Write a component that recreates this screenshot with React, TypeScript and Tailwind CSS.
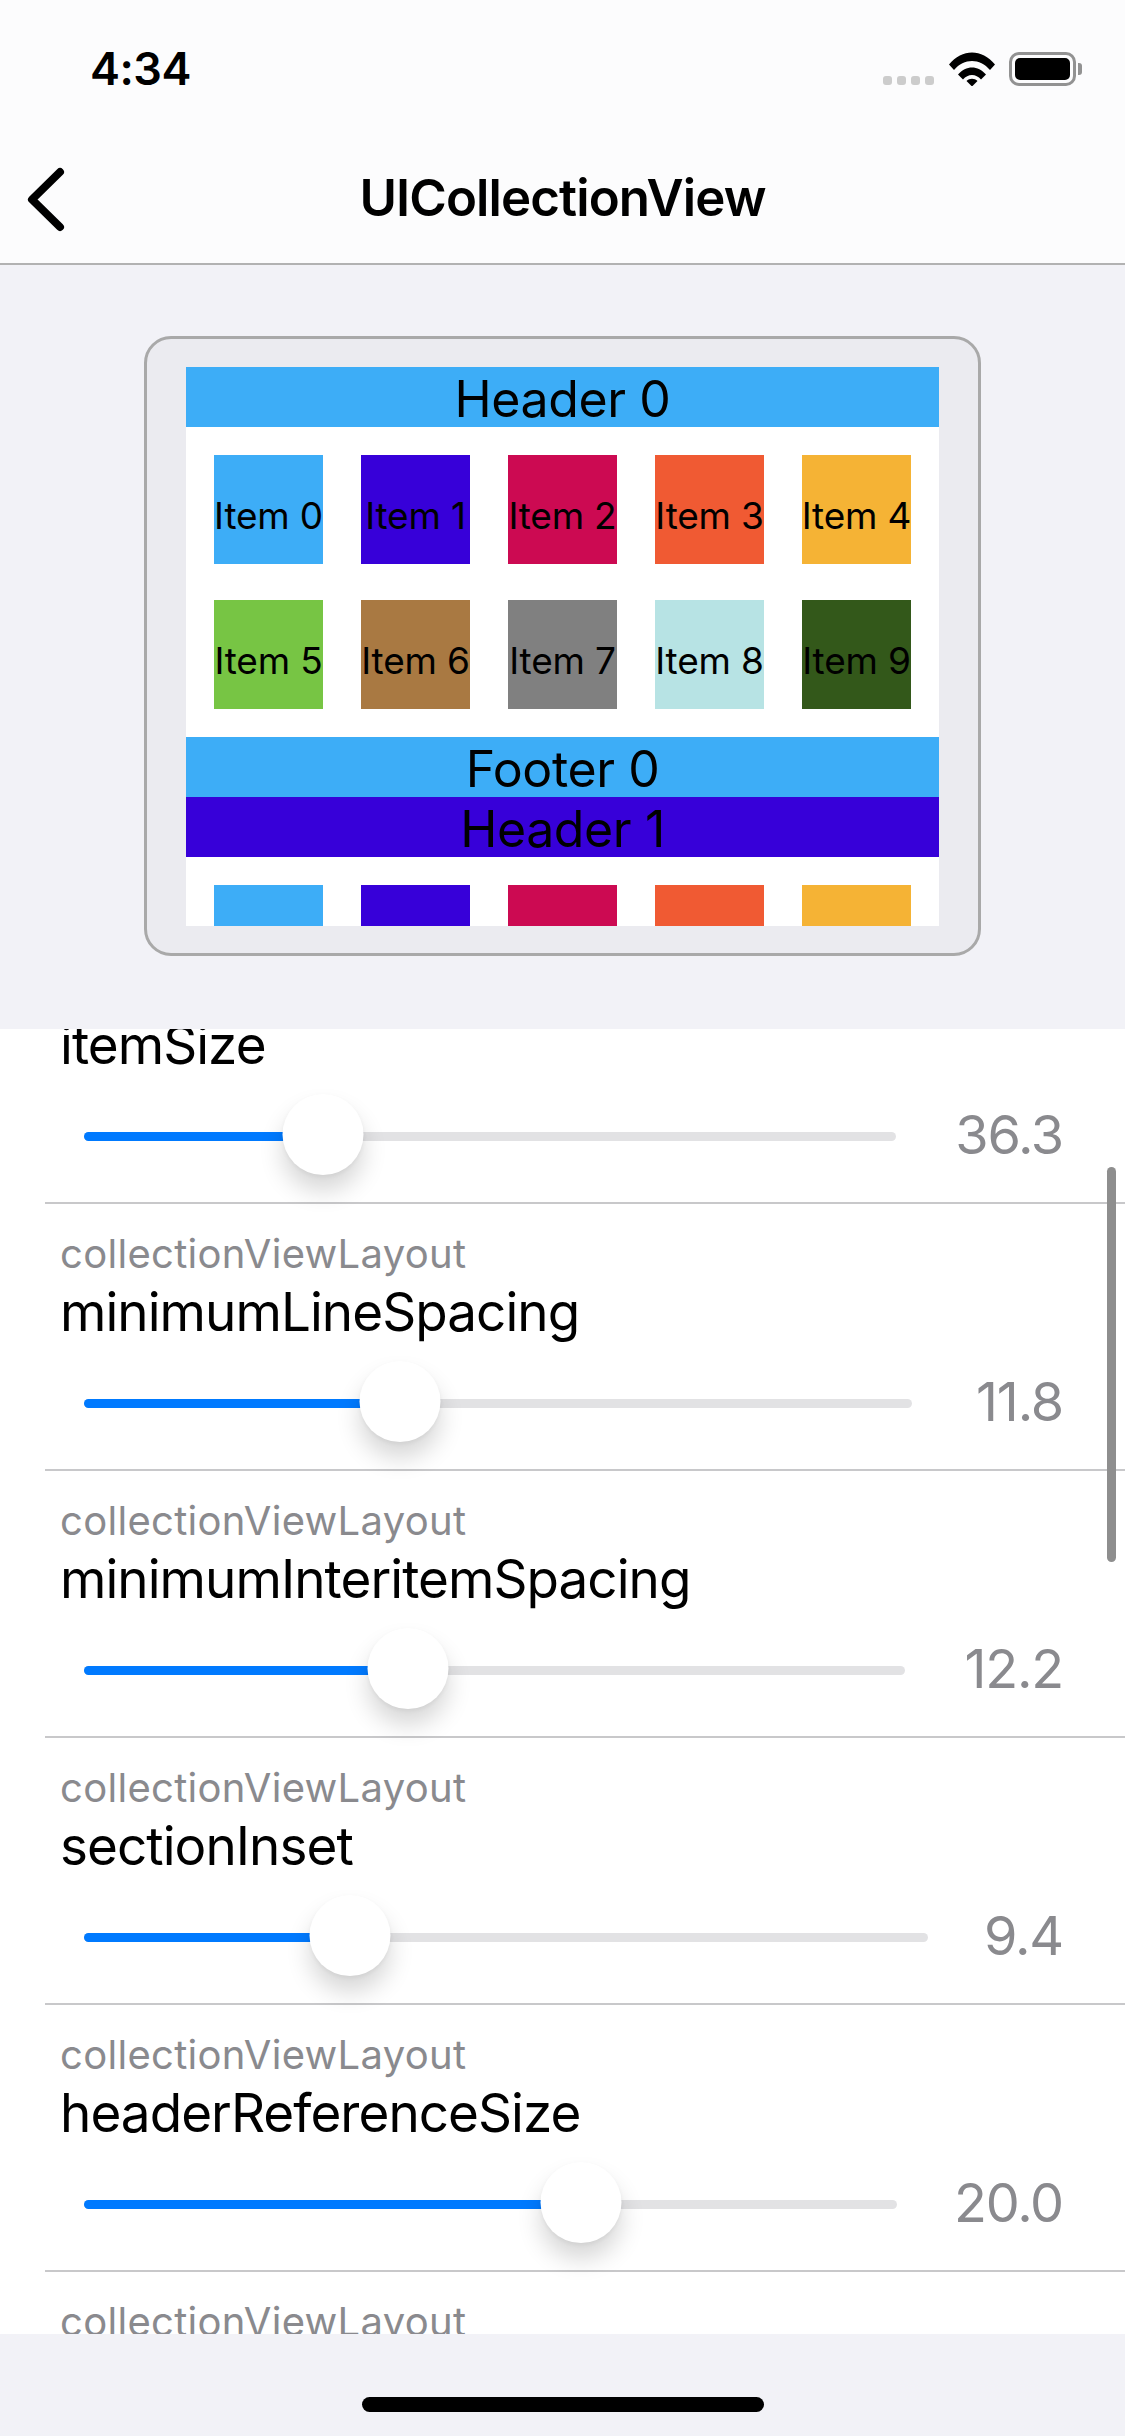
const palette = [
  "bg-[#3dadf7]",
  "bg-[#3700d9]",
  "bg-[#cc0a52]",
  "bg-[#f05a33]",
  "bg-[#f5b335]",
  "bg-[#77c544]",
  "bg-[#a97942]",
  "bg-[#808080]",
  "bg-[#b7e3e4]",
  "bg-[#33581a]",
];

const rows = [
  { label: "collectionViewLayout", name: "itemSize", value: "36.3", percent: 29.4, gap: "gap-[59px]" },
  { label: "collectionViewLayout", name: "minimumLineSpacing", value: "11.8", percent: 38.2, gap: "gap-[64px]" },
  { label: "collectionViewLayout", name: "minimumInteritemSpacing", value: "12.2", percent: 39.4, gap: "gap-[59px]" },
  { label: "collectionViewLayout", name: "sectionInset", value: "9.4", percent: 31.5, gap: "gap-[56px]" },
  { label: "collectionViewLayout", name: "headerReferenceSize", value: "20.0", percent: 61.1, gap: "gap-[57px]" },
  { label: "collectionViewLayout", name: "footerReferenceSize", value: "20.0", percent: 61.1, gap: "gap-[57px]" },
];

function StatusBar() {
  return (
    <div className="flex h-[132px] items-start justify-between pl-[90px] pr-[43px] pt-[43px]">
      <span className="text-[45px] font-semibold leading-[52px] tracking-[-0.5px] text-black">4:34</span>
      <div className="flex items-end pt-[9px]">
        {/* signal */}
        <div className="mb-[1px] flex gap-[5px]">
          {[0, 1, 2, 3].map((i) => (
            <div key={i} className="h-[9px] w-[9px] rounded-[3px] bg-[#cccccc]" />
          ))}
        </div>
        <svg className="ml-[15px]" width="46" height="34" viewBox="0 0 46 34">
          <path d="M0 12.5C13 -3.5 33 -3.5 46 12.5L41 18C31 6 15 6 5 18Z" fill="black" />
          <path d="M9 22.5C17 13 29 13 37 22.5L32 27.5C27 21.5 19 21.5 14 27.5Z" fill="black" />
          <path d="M17.5 29C20.5 26 25.5 26 28.5 29L23 34.5Z" fill="black" />
        </svg>
        <div className="ml-[14px] flex items-center">
          <div className="box-border h-[34px] w-[67px] rounded-[10px] border-[3px] border-[#929292] p-[3px]">
            <div className="h-full w-full rounded-[5px] bg-black" />
          </div>
          <div className="ml-[2px] h-[12px] w-[4px] rounded-r-[3px] bg-[#929292]" />
        </div>
      </div>
    </div>
  );
}

function NavBar() {
  return (
    <div className="relative flex h-[133px] items-start justify-center border-b-[2px] border-[#b2b2b2]">
      <svg className="absolute left-[24px] top-[34px]" width="42" height="66" viewBox="0 0 42 66">
        <path d="M36 6L8 33.5L36 61" fill="none" stroke="black" strokeWidth="8" strokeLinecap="round" strokeLinejoin="round" />
      </svg>
      <span className="mt-[36px] text-[51px] font-semibold leading-[60px] tracking-[-0.9px] text-black">UICollectionView</span>
    </div>
  );
}

function SupplementaryBar({ text, color }: { text: string; color: string }) {
  return (
    <div className={`flex h-[60px] items-center justify-center pt-[3px] text-[50px] leading-none tracking-[-0.4px] text-black ${color}`}>
      {text}
    </div>
  );
}

function ItemGrid({ showText }: { showText: boolean }) {
  return (
    <div className="grid grid-cols-5 gap-x-[38px] gap-y-[36px] px-[28px] pt-[28px] pb-[28px]">
      {palette.slice(0, showText ? 10 : 5).map((color, i) => (
        <div
          key={i}
          className={`flex h-[109px] w-[109px] items-center justify-center whitespace-nowrap pt-[11px] text-[37px] leading-none tracking-[-0.2px] text-black ${color}`}
        >
          {showText ? `Item ${i}` : ""}
        </div>
      ))}
    </div>
  );
}

function Preview() {
  return (
    <div className="flex h-[764px] justify-center bg-[#f2f2f7] pt-[71px]">
      <div className="box-border h-[620px] w-[837px] rounded-[27px] border-[3px] border-[#a9a9a9] bg-[#ebebf0] pl-[39px] pt-[28px]">
        <div className="h-[559px] w-[753px] overflow-hidden bg-white">
          <SupplementaryBar text="Header 0" color="bg-[#3dadf7]" />
          <ItemGrid showText />
          <SupplementaryBar text="Footer 0" color="bg-[#3dadf7]" />
          <SupplementaryBar text="Header 1" color="bg-[#3700d9]" />
          <ItemGrid showText={false} />
        </div>
      </div>
    </div>
  );
}

function Slider({ percent }: { percent: number }) {
  return (
    <div className="relative flex h-[81px] flex-1 items-center">
      <div className="mt-[4px] h-[9px] w-full overflow-hidden rounded-full bg-[#e2e2e4]">
        <div className="h-full bg-[#007aff]" style={{ width: `${percent}%` }} />
      </div>
      <div
        className="absolute top-0 h-[81px] w-[81px] -translate-x-1/2 rounded-full bg-white shadow-[0_16px_24px_rgba(0,0,0,0.16),0_2px_4px_rgba(0,0,0,0.05)]"
        style={{ left: `${percent}%` }}
      />
    </div>
  );
}

function SettingRow({ row }: { row: (typeof rows)[number] }) {
  return (
    <div className="ml-[45px] box-border h-[267px] border-b-[2px] border-[#c8c8ca] pt-[27px]">
      <div className="pl-[15px] text-[40px] leading-[45px] tracking-[0.3px] text-[#8a8a8e]">{row.label}</div>
      <div className="mt-[6px] pl-[15px] text-[53px] leading-[60px] tracking-[-0.95px] text-black">{row.name}</div>
      <div className={`mt-[19px] flex items-center pl-[39px] pr-[62px] ${row.gap}`}>
        <Slider percent={row.percent} />
        <span className="text-[54px] leading-[60px] tracking-[-1.2px] text-[#8a8a8e]">{row.value}</span>
      </div>
    </div>
  );
}

export default function App() {
  return (
    <div
      className="relative flex h-[2436px] w-[1125px] flex-col overflow-hidden bg-[#f2f2f7]"
      style={{ fontFamily: "Inter, 'Liberation Sans', sans-serif" }}
    >
      <div className="bg-[#fcfcfd]">
        <StatusBar />
        <NavBar />
      </div>
      <Preview />
      <div className="relative h-[1305px] overflow-hidden bg-white">
        <div className="-mt-[92px]">
          {rows.map((row) => (
            <SettingRow key={row.name} row={row} />
          ))}
        </div>
        {/* scroll indicator */}
        <div className="absolute right-[9px] top-[138px] h-[395px] w-[9px] rounded-full bg-[#8e8e8e]" />
      </div>
      <div className="flex flex-1 justify-center pt-[63px]">
        <div className="h-[15px] w-[402px] rounded-full bg-black" />
      </div>
    </div>
  );
}
